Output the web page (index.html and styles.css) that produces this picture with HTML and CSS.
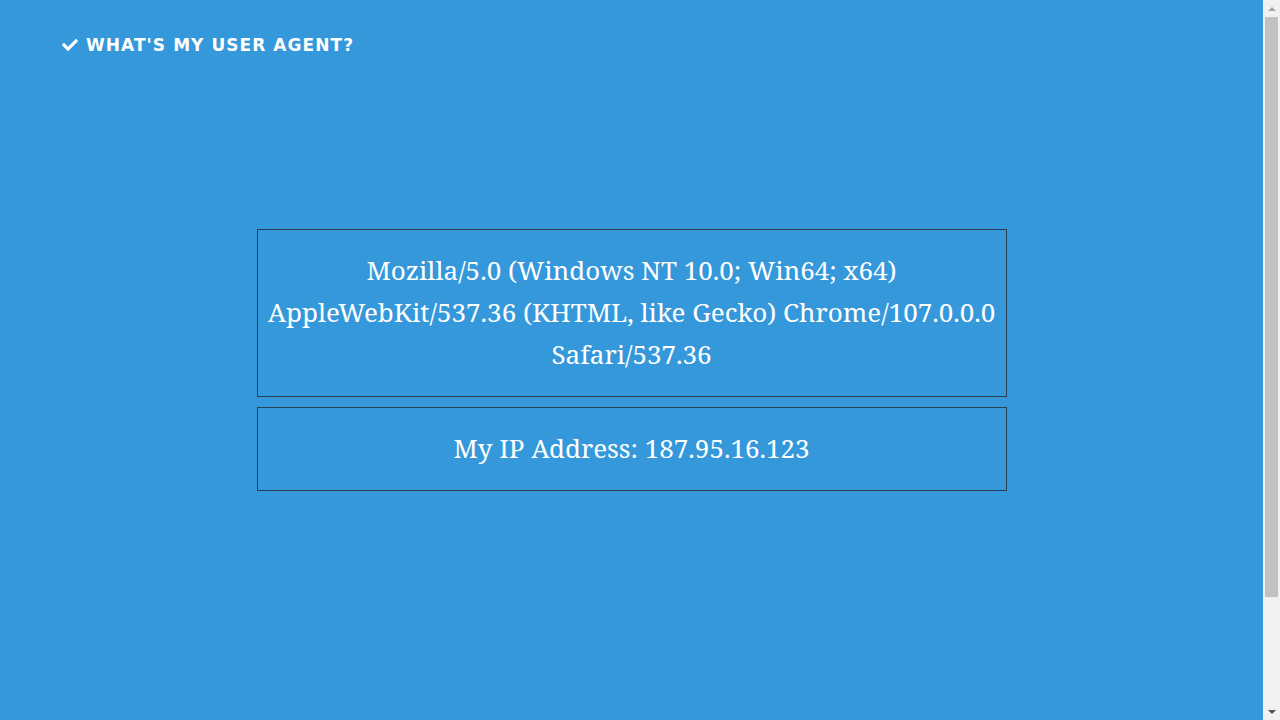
FILE: index.html
```html
<!DOCTYPE html>
<html>
<head>
<meta charset="utf-8">
<title>What's my user agent?</title>
<link rel="stylesheet" href="styles.css">
</head>
<body>
<div class="page">
  <header class="site-header">
    <a class="brand" href="#">
      <svg class="brand-icon" viewBox="0 0 512 512" width="16" height="16" aria-hidden="true"><path fill="#fff" d="M173.9 439.4l-166.4-166.4c-10-10-10-26.2 0-36.2l36.2-36.2c10-10 26.2-10 36.2 0L192 312.7 432.1 72.6c10-10 26.2-10 36.2 0l36.2 36.2c10 10 10 26.2 0 36.2L210.1 439.4c-10 10-26.2 10-36.2 0z"/></svg>
      <span>WHAT'S MY USER AGENT?</span>
    </a>
  </header>
  <main class="content">
    <div class="info-box">Mozilla/5.0 (Windows NT 10.0; Win64; x64) AppleWebKit/537.36 (KHTML, like Gecko) Chrome/107.0.0.0 Safari/537.36</div>
    <div class="info-box">My IP Address: 187.95.16.123</div>
  </main>
</div>
<div class="scrollbar" aria-hidden="true">
  <div class="sb-arrow sb-up"></div>
  <div class="sb-track"><div class="sb-thumb"></div></div>
  <div class="sb-arrow sb-down"></div>
</div>
</body>
</html>
```

FILE: styles.css
```css
html, body {
  margin: 0;
  padding: 0;
}
body {
  background: #3598db;
  color: #fff;
  font-family: "Noto Serif", "DejaVu Serif", serif;
  overflow: hidden;
}
.page {
  margin-right: 17px;
  min-height: 852px;
}
.site-header {
  padding: 35px 62px 0;
  height: 30px;
}
.brand {
  display: inline-flex;
  align-items: center;
  gap: 8px;
  color: #fff;
  text-decoration: none;
  font-family: "DejaVu Sans", "Open Sans", sans-serif;
  font-weight: bold;
  font-size: 17px;
  letter-spacing: 1.05px;
}
.brand-icon {
  display: block;
}
.content {
  width: 750px;
  margin: 164px auto 0;
  display: flex;
  flex-direction: column;
  gap: 10px;
}
.info-box {
  border: 1px solid #2c3e50;
  padding: 19px 10px 21px;
  text-align: center;
  font-size: 26px;
  line-height: 42px;
}
.scrollbar {
  position: fixed;
  top: 0;
  right: 0;
  width: 17px;
  height: 720px;
  background: #f1f1f1;
  display: flex;
  flex-direction: column;
}
.sb-arrow {
  height: 17px;
  display: flex;
  align-items: center;
  justify-content: center;
}
.sb-up::before,
.sb-down::before {
  content: "";
  width: 0;
  height: 0;
  border-left: 4px solid transparent;
  border-right: 4px solid transparent;
}
.sb-up::before {
  border-bottom: 4px solid #a3a3a3;
}
.sb-down::before {
  border-top: 4px solid #505050;
}
.sb-track {
  flex: 1;
  padding: 0 2px;
}
.sb-thumb {
  height: 580px;
  background: #c1c1c1;
}
```
